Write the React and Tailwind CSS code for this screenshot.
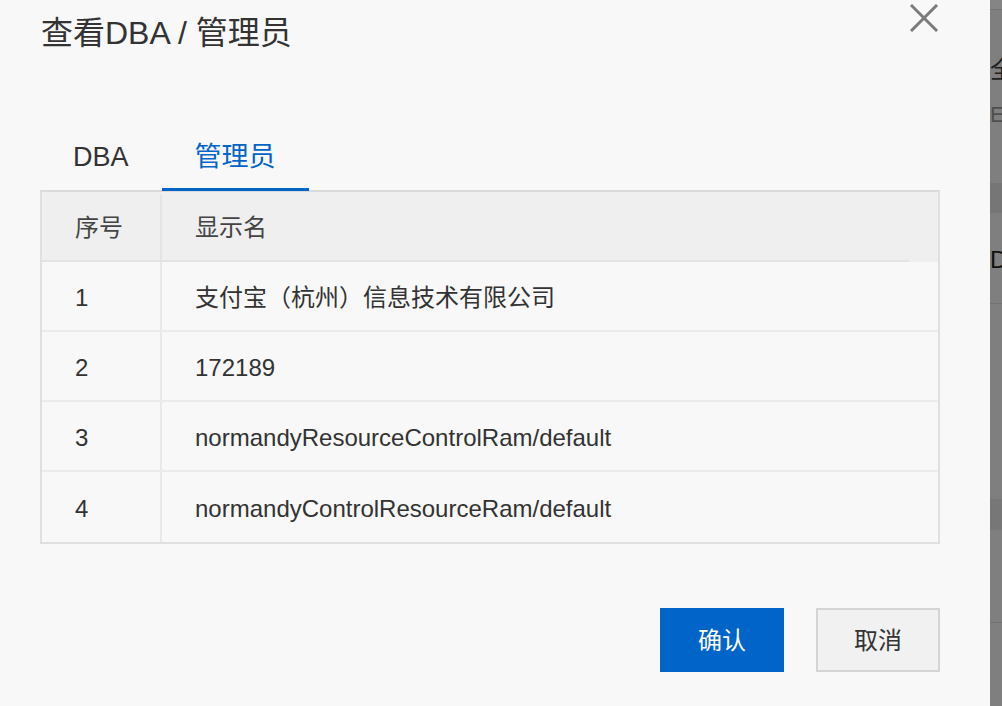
import React from 'react';

const rows = [
  { id: 1, name: '支付宝（杭州）信息技术有限公司' },
  { id: 2, name: '172189' },
  { id: 3, name: 'normandyResourceControlRam/default' },
  { id: 4, name: 'normandyControlResourceRam/default' },
];

const font = { fontFamily: '"Liberation Sans", "Noto Sans CJK SC", sans-serif' };

function CloseIcon() {
  return (
    <svg width="28" height="28" viewBox="0 0 28 28" className="block">
      <path d="M2 2 L26 26 M26 2 L2 26" stroke="#7b7b7b" strokeWidth="3" strokeLinecap="square" />
    </svg>
  );
}

// page behind the overlay, only a sliver of it shows
function BackdropStrip() {
  return (
    <div className="flex w-[12px] flex-col overflow-hidden bg-[#7f7f7f]">
      <div className="h-[9px] bg-[#858585]" />
      <div className="h-[1px] bg-[#727272]" />
      <div className="h-[46px]" />
      <div className="h-[28px] whitespace-nowrap text-[24px] leading-[28px] text-[#1e1e1e]">全</div>
      <div className="h-[17px]" />
      <div className="h-[28px] whitespace-nowrap text-[22px] leading-[28px] text-[#4f4f4f]">E</div>
      <div className="h-[54px]" />
      <div className="h-[30px] bg-[#767676]" />
      <div className="h-[35px]" />
      <div className="h-[24px] whitespace-nowrap text-[24px] leading-[24px] text-[#111]">D</div>
      <div className="h-[31px]" />
      <div className="h-[1px] bg-[#737373]" />
      <div className="h-[195px]" />
      <div className="h-[31px] bg-[#777777]" />
      <div className="h-[92px]" />
      <div className="h-[1px] bg-[#737373]" />
    </div>
  );
}

export default function App() {
  return (
    <div className="flex h-[706px] w-[1002px] overflow-hidden" style={font}>
      <div className="flex w-[990px] flex-col bg-[#f8f8f8] pl-[40px] pr-[50px]">
        {/* Header */}
        <div className="flex items-start justify-between">
          <h1 className="mt-[17px] pl-[1px] text-[32px] leading-[32px] font-normal text-[#333]">
            查看DBA / 管理员
          </h1>
          <div className="mt-[4px] mr-[2px]">
            <CloseIcon />
          </div>
        </div>

        {/* Tabs */}
        <div className="relative z-10 mt-[73px] -mb-[1px] flex">
          <div className="border-b-[3px] border-transparent px-[33px] pt-[21px] pb-[17px] text-[27px] leading-[28px] text-[#333]">
            DBA
          </div>
          <div className="border-b-[3px] border-[#0064c8] px-[33px] pt-[21px] pb-[17px] text-[27px] leading-[28px] text-[#0064c8]">
            管理员
          </div>
        </div>

        {/* Table */}
        <div className="border-2 border-[#e0e0e0] border-t-[#dadada] text-[24px] text-[#333]">
          <div className="flex h-[68px] items-center bg-[#efefef] pt-[3px] text-[#444]">
            <div className="flex h-full w-[120px] items-center border-r-2 border-[#e4e4e4] pl-[33px]">序号</div>
            <div className="pl-[33px]">显示名</div>
          </div>
          <div className="flex h-[2px] bg-[#efefef]">
            <div className="flex-1 bg-[#e3e3e3]" />
            <div className="w-[29px]" />
          </div>
          {rows.map((row, i) => (
            <div
              key={row.id}
              className={
                'flex h-[70px] items-center ' + (i < rows.length - 1 ? 'border-b-2 border-[#ebebeb]' : '')
              }
            >
              <div className="flex h-full w-[120px] items-center border-r-2 border-[#e8e8e8] pt-[4px] pl-[33px]">
                {row.id}
              </div>
              <div className="pt-[4px] pl-[33px] whitespace-nowrap">{row.name}</div>
            </div>
          ))}
        </div>

        {/* Footer buttons */}
        <div className="mt-[64px] flex justify-end gap-[32px]">
          <button className="h-[64px] w-[124px] bg-[#0064c8] pt-[2px] text-[24px] text-white">确认</button>
          <button className="h-[64px] w-[124px] border-2 border-[#d4d4d4] bg-[#f1f1f1] pt-[2px] text-[24px] text-[#333]">
            取消
          </button>
        </div>
      </div>
      <BackdropStrip />
    </div>
  );
}
